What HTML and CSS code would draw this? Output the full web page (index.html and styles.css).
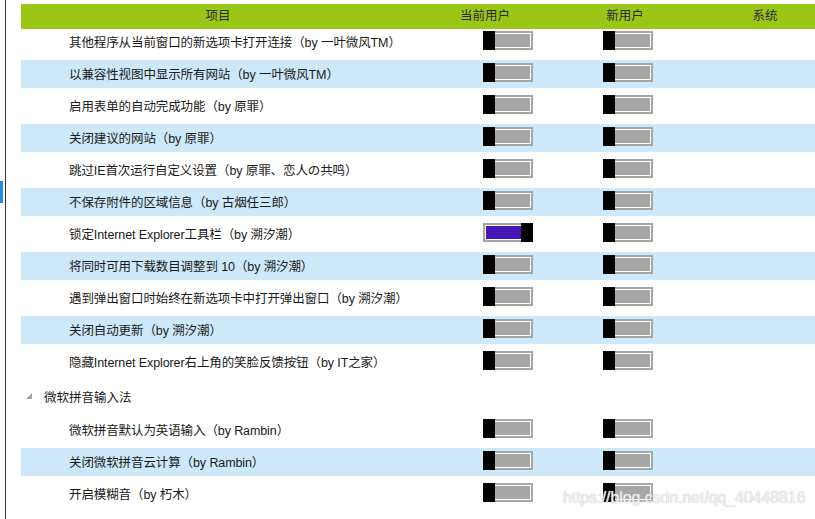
FILE: index.html
```
<!DOCTYPE html>
<html lang="zh-CN">
  <head>
    <meta charset="UTF-8" />
    <meta name="viewport" content="width=device-width, initial-scale=1.0" />
    <title>IE 设置</title>
    <link rel="stylesheet" href="styles.css">
  </head>
  <body>
    <div class="window">
      <div class="side">
        <div class="side-mark"></div>
      </div>

      <div class="panel">
        <div class="header">
          <div>项目</div>
          <div>当前用户</div>
          <div>新用户</div>
          <div>系统</div>
        </div>

        <div class="list">
          <div class="group">
            <div class="row">
              <span class="label">其他程序从当前窗口的新选项卡打开连接（by 一叶微风TM）</span>
              <div class="switch"></div>
              <span></span>
              <div class="switch"></div>
            </div>
            <div class="row">
              <span class="label">以兼容性视图中显示所有网站（by 一叶微风TM）</span>
              <div class="switch"></div>
              <span></span>
              <div class="switch"></div>
            </div>
            <div class="row">
              <span class="label">启用表单的自动完成功能（by 原罪）</span>
              <div class="switch"></div>
              <span></span>
              <div class="switch"></div>
            </div>
            <div class="row">
              <span class="label">关闭建议的网站（by 原罪）</span>
              <div class="switch"></div>
              <span></span>
              <div class="switch"></div>
            </div>
            <div class="row">
              <span class="label">跳过IE首次运行自定义设置（by 原罪、恋人の共鸣）</span>
              <div class="switch"></div>
              <span></span>
              <div class="switch"></div>
            </div>
            <div class="row">
              <span class="label">不保存附件的区域信息（by 古烟任三郎）</span>
              <div class="switch"></div>
              <span></span>
              <div class="switch"></div>
            </div>
            <div class="row">
              <span class="label">锁定Internet Explorer工具栏（by 溯汐潮）</span>
              <div class="switch on"></div>
              <span></span>
              <div class="switch"></div>
            </div>
            <div class="row">
              <span class="label">将同时可用下载数目调整到 10（by 溯汐潮）</span>
              <div class="switch"></div>
              <span></span>
              <div class="switch"></div>
            </div>
            <div class="row">
              <span class="label">遇到弹出窗口时始终在新选项卡中打开弹出窗口（by 溯汐潮）</span>
              <div class="switch"></div>
              <span></span>
              <div class="switch"></div>
            </div>
            <div class="row">
              <span class="label">关闭自动更新（by 溯汐潮）</span>
              <div class="switch"></div>
              <span></span>
              <div class="switch"></div>
            </div>
            <div class="row">
              <span class="label">隐藏Internet Explorer右上角的笑脸反馈按钮（by IT之家）</span>
              <div class="switch"></div>
              <span></span>
              <div class="switch"></div>
            </div>
          </div>

          <div class="group-title">
            <span class="expander"></span>
            <span>微软拼音输入法</span>
          </div>

          <div class="group">
            <div class="row">
              <span class="label">微软拼音默认为英语输入（by Rambin）</span>
              <div class="switch"></div>
              <span></span>
              <div class="switch"></div>
            </div>
            <div class="row">
              <span class="label">关闭微软拼音云计算（by Rambin）</span>
              <div class="switch"></div>
              <span></span>
              <div class="switch"></div>
            </div>
            <div class="row">
              <span class="label">开启模糊音（by 朽木）</span>
              <div class="switch"></div>
              <span></span>
              <div class="switch"></div>
            </div>
          </div>
        </div>
      </div>
    </div>

    <div class="watermark">https://blog.csdn.net/qq_40448816</div>
  </body>
</html>
```

FILE: styles.css
```
body {
  margin: 0;
  overflow: hidden;
  background: #fff;
  font-family: "Liberation Sans", "Noto Sans CJK SC", sans-serif;
  font-size: 12.5px;
  color: #1a1a1a;
}
.window {
  display: flex;
  height: 519px;
}
.side {
  width: 5px;
  flex: none;
  border-right: 1px solid #333;
}
.side-mark {
  width: 3px;
  height: 22px;
  margin-top: 181px;
  background: #1f8fe6;
}
.panel {
  flex: 1;
  min-width: 0;
  padding-top: 4px;
  overflow: hidden;
}
.header {
  position: relative;
  z-index: 1;
  display: grid;
  grid-template-columns: 394px 140px 140px 140px;
  width: 814px;
  height: 25px;
  margin-left: 15px;
  background: #9bc617;
  color: #2a2a2a;
  line-height: 24px;
  text-align: center;
}
.list {
  display: flex;
  flex-direction: column;
  margin-top: -3px;
  margin-left: 15px;
}
.group {
  display: flex;
  flex-direction: column;
}
.row {
  display: grid;
  grid-template-columns: 414px 50px 70px 50px;
  align-items: center;
  height: 28px;
  margin: 2px 0;
  padding-left: 48px;
}
.row:nth-child(even) {
  background: #cce8f9;
}
.label {
  margin-bottom: 2px;
  letter-spacing: -0.1px;
}
.switch {
  position: relative;
  align-self: start;
  box-sizing: border-box;
  width: 50px;
  height: 19px;
  margin-top: 3px;
  border: 2px solid #a6a6a6;
  background: #a6a6a6;
  box-shadow: inset 0 0 0 1px #fff;
}
.switch::after {
  content: "";
  position: absolute;
  top: -2px;
  left: -2px;
  width: 12px;
  height: 19px;
  background: #000;
}
.switch.on {
  background: #4617b4;
}
.switch.on::after {
  left: auto;
  right: -2px;
}
.group-title {
  display: flex;
  align-items: center;
  gap: 12px;
  height: 36px;
  padding-left: 5px;
}
.expander {
  width: 0;
  height: 0;
  border-left: 6px solid transparent;
  border-bottom: 6px solid #a3a3a3;
}
.watermark {
  position: absolute;
  left: 563px;
  top: 489px;
  font-family: "Liberation Sans", Arial, sans-serif;
  font-size: 15.8px;
  color: rgba(255, 255, 255, 0.75);
  text-shadow: 0 0 1px #c8c8c8, 0 0 1px #c8c8c8;
}
```
